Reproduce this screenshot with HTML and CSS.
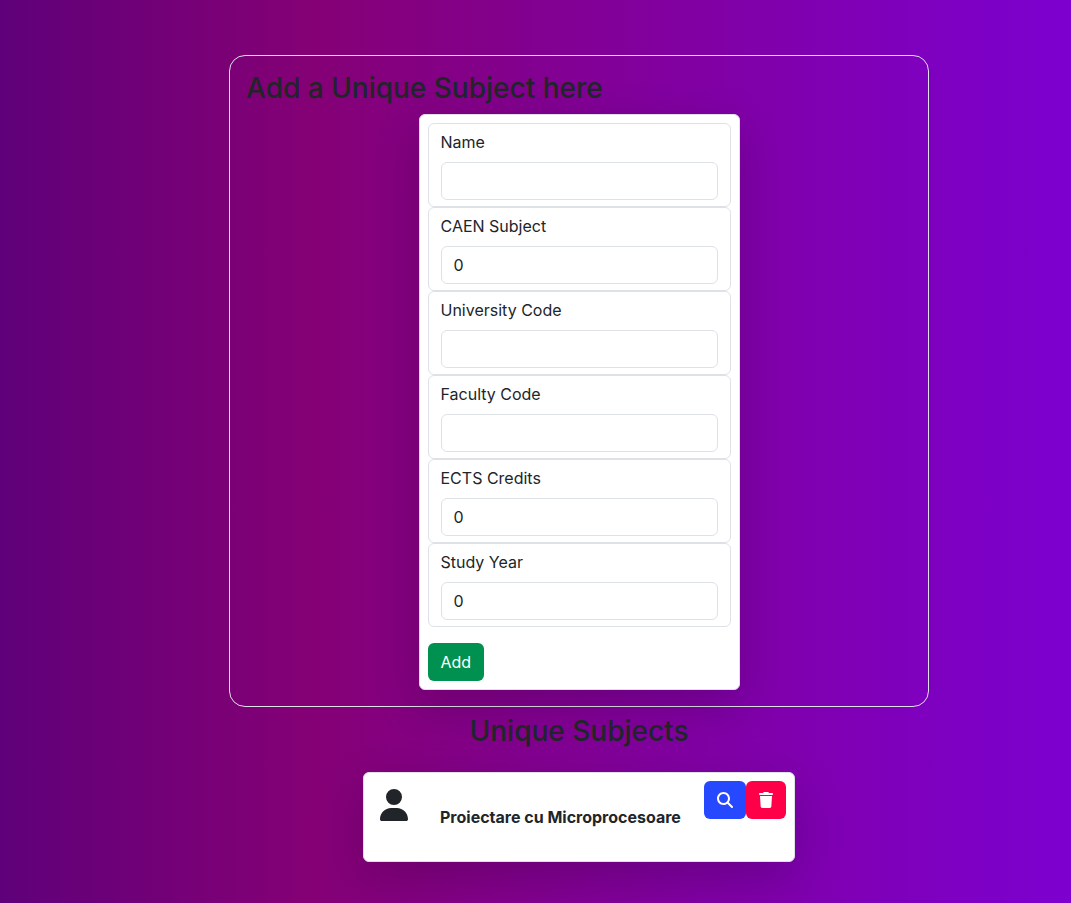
FILE: index.html
```html
<!DOCTYPE html>
<html lang="en">
<head>
<meta charset="utf-8">
<meta name="viewport" content="width=device-width, initial-scale=1">
<title>Unique Subjects</title>
<link rel="stylesheet" href="styles.css">
</head>
<body>
<main class="page">
  <section class="panel">
    <h1 class="title">Add a Unique Subject here</h1>
    <form class="card form">
      <div class="field"><label for="name">Name</label><input id="name" type="text"></div>
      <div class="field"><label for="caen">CAEN Subject</label><input id="caen" type="text" inputmode="numeric" value="0"></div>
      <div class="field"><label for="university">University Code</label><input id="university" type="text"></div>
      <div class="field"><label for="faculty">Faculty Code</label><input id="faculty" type="text"></div>
      <div class="field"><label for="credits">ECTS Credits</label><input id="credits" type="text" inputmode="numeric" value="0"></div>
      <div class="field"><label for="year">Study Year</label><input id="year" type="text" inputmode="numeric" value="0"></div>
      <button class="button add" type="submit">Add</button>
    </form>
  </section>
  <h2 class="title list-title">Unique Subjects</h2>
  <article class="card subject">
    <svg class="person" viewBox="0 0 448 512" aria-hidden="true"><path fill="currentColor" d="M224 256A128 128 0 1 0 224 0a128 128 0 1 0 0 256zm-45.700 48C79.800 304 0 383.800 0 482.300C0 498.700 13.300 512 29.700 512H418.300c16.400 0 29.700-13.300 29.700-29.700C448 383.800 368.200 304 269.700 304H178.300z"/></svg>
    <h3 class="subject-name">Proiectare cu Microprocesoare</h3>
    <div class="actions">
      <button class="button view" type="button" aria-label="View"><svg class="icon" viewBox="0 0 512 512" aria-hidden="true"><path fill="currentColor" d="M416 208c0 45.900-14.900 88.300-40 122.700L502.600 457.400c12.500 12.500 12.500 32.800 0 45.300s-32.800 12.500-45.300 0L330.700 376c-34.400 25.200-76.800 40-122.700 40C93.100 416 0 322.900 0 208S93.100 0 208 0S416 93.100 416 208zM208 352a144 144 0 1 0 0-288 144 144 0 1 0 0 288z"/></svg></button>
      <button class="button delete" type="button" aria-label="Delete"><svg class="icon trash" viewBox="0 0 448 512" aria-hidden="true"><path fill="currentColor" d="M135.200 17.700C140.600 6.800 151.700 0 163.800 0H284.200c12.100 0 23.200 6.800 28.600 17.700L320 32h96c17.700 0 32 14.300 32 32s-14.300 32-32 32H32C14.300 96 0 81.700 0 64S14.300 32 32 32h96l7.200-14.300zM32 128H416L394.800 467c-1.600 25.300-22.600 45-47.900 45H101.100c-25.300 0-46.300-19.700-47.900-45L32 128z"/></svg></button>
    </div>
  </article>
</main>
</body>
</html>
```
FILE: styles.css
```css
* {
  box-sizing: border-box;
}

body {
  margin: 0;
  min-height: 100vh;
  font: 16px/24px Inter, "Liberation Sans", sans-serif;
  color: #212529;
  background: linear-gradient(90deg, #5f007a 0%, #850075 29%, #7d00d0 100%);
}

.page {
  display: flex;
  flex-direction: column;
  align-items: center;
  padding: 55px 16px 40px 103px;
}

.panel {
  width: 100%;
  max-width: 700px;
  padding: 16px;
  border: 1px solid #dee2e6;
  border-radius: 16px;
}

.title {
  margin: 0 0 10px;
  font-size: 28px;
  line-height: 32px;
  font-weight: 500;
}

.list-title {
  margin: 8px 0 25px;
}

.card {
  background: #fff;
  border: 1px solid #dee2e6;
  border-radius: 6px;
  box-shadow: 0 16px 48px rgba(0, 0, 0, 0.18);
}

.form {
  width: 321px;
  max-width: 100%;
  margin: 0 auto;
  padding: 8px;
}

.field {
  padding: 6px 12px;
  border: 1px solid #dee2e6;
  border-radius: 6px;
}

.field label {
  display: block;
  margin-bottom: 8px;
}

.field input {
  display: block;
  width: 100%;
  height: 38px;
  padding: 6px 12px;
  font: inherit;
  color: inherit;
  background: #fff;
  border: 1px solid #dee2e6;
  border-radius: 6px;
}

.button {
  height: 38px;
  padding: 0 13px;
  font: inherit;
  color: #fff;
  border: 0;
  border-radius: 6px;
}

.add {
  display: block;
  margin-top: 16px;
  background: #009150;
}

.subject {
  display: flex;
  width: 432px;
  max-width: 100%;
  min-height: 90px;
  padding: 8px;
}

.person {
  width: 28px;
  height: 32px;
  margin: 8px 32px 0 8px;
}

.subject-name {
  flex: 1;
  margin: 24px 0 0;
  font-size: 16px;
  line-height: 24px;
  font-weight: 700;
}

.actions {
  display: flex;
  align-items: flex-start;
}

.view {
  background: #2648ff;
}

.delete {
  background: #ff0048;
}

.icon {
  display: block;
  width: 16px;
  height: 16px;
}

.trash {
  width: 14px;
}
```
